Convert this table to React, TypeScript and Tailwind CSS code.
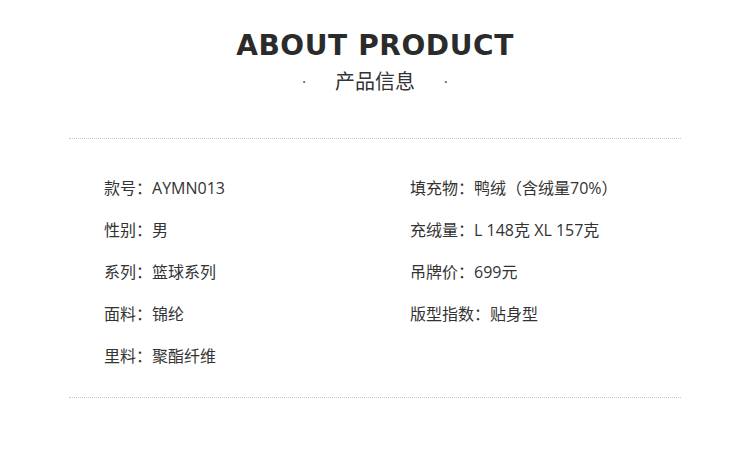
const left = [
  ["款号", "AYMN013"],
  ["性别", "男"],
  ["系列", "篮球系列"],
  ["面料", "锦纶"],
  ["里料", "聚酯纤维"],
];

const right = [
  ["填充物", "鸭绒（含绒量70%）"],
  ["充绒量", "L 148克 XL 157克"],
  ["吊牌价", "699元"],
  ["版型指数", "贴身型"],
];

function Row({ label, value }: { label: string; value: string }) {
  return (
    <div className="h-[42px] flex items-center whitespace-nowrap">
      <span>{label}：</span>
      <span>{value}</span>
    </div>
  );
}

export default function App() {
  return (
    <div
      className="w-[750px] h-[459px] bg-white text-[#333] overflow-hidden"
      style={{ fontFamily: '"Open Sans", "Noto Sans CJK SC", sans-serif' }}
    >
      {/* header */}
      <div className="pt-[28px] flex flex-col items-center">
        <h1
          className="text-[28px] leading-[36px] font-bold tracking-[0.6px] text-[#2b2b2b]"
          style={{ fontFamily: '"DejaVu Sans", sans-serif' }}
        >
          ABOUT PRODUCT
        </h1>
        <div className="mt-[4px] flex items-center text-[20px] leading-[28px] text-[#333]">
          <span className="text-[14px]">·</span>
          <span className="mx-[29px]">产品信息</span>
          <span className="text-[14px]">·</span>
        </div>
      </div>

      {/* 参数 */}
      <div className="mx-[69px] mt-[42px] border-t border-dotted border-[#c8c8c8]">
        <div className="pt-[28px] pb-[20px] pl-[35px] flex text-[16px]">
          <div className="w-[306px]">
            {left.map(([l, v]) => (
              <Row key={l} label={l} value={v} />
            ))}
          </div>
          <div>
            {right.map(([l, v]) => (
              <Row key={l} label={l} value={v} />
            ))}
          </div>
        </div>
      </div>
      <div className="mx-[69px] border-t border-dotted border-[#c8c8c8]" />
    </div>
  );
}
